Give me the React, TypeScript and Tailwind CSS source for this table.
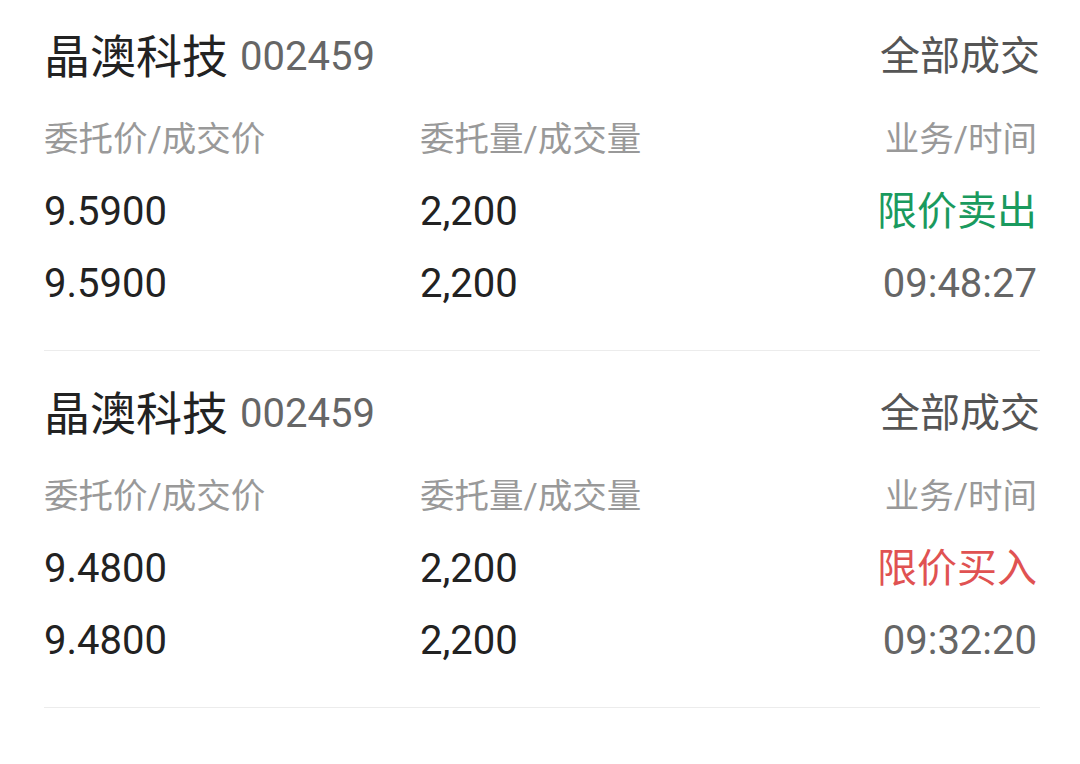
import React from "react";

type Item = {
  name: string;
  code: string;
  status: string;
  price: string;
  vol: string;
  biz: string;
  bizColor: "sell" | "buy";
  time: string;
};

const items: Item[] = [
  { name: "晶澳科技", code: "002459", status: "全部成交", price: "9.5900", vol: "2,200", biz: "限价卖出", bizColor: "sell", time: "09:48:27" },
  { name: "晶澳科技", code: "002459", status: "全部成交", price: "9.4800", vol: "2,200", biz: "限价买入", bizColor: "buy", time: "09:32:20" },
];

const font = { fontFamily: "Roboto, 'Noto Sans CJK SC', sans-serif" };

function Block({ it, first }: { it: Item; first: boolean }) {
  return (
    <div className={`border-b border-[#ececec] pb-[30px] ${first ? "pt-[27px]" : "pt-[33px]"}`}>
      <div className="flex h-[60px] items-center justify-between">
        <div className="flex items-center">
          <span className="text-[46px] leading-none text-[#222]">{it.name}</span>
          <span className="ml-[12px] text-[40px] leading-none text-[#666]">{it.code}</span>
        </div>
        <span className="text-[40px] leading-none text-[#555]">{it.status}</span>
      </div>
      <div className="mt-[26px] mb-[11px] flex h-[52px] items-center text-[34.5px] leading-none text-[#999]">
        <span className="w-[376px]">委托价/成交价</span>
        <span className="flex-1">委托量/成交量</span>
        <span className="pr-[3px]">业务/时间</span>
      </div>
      <div className="flex h-[72px] items-center text-[40px] leading-none text-[#222]">
        <span className="w-[376px]">{it.price}</span>
        <span className="flex-1">{it.vol}</span>
        <span className={`pr-[3px] ${it.bizColor === "sell" ? "text-[#1a9a5e]" : "text-[#e05252]"}`}>{it.biz}</span>
      </div>
      <div className="flex h-[72px] items-center text-[40px] leading-none text-[#222]">
        <span className="w-[376px]">{it.price}</span>
        <span className="flex-1">{it.vol}</span>
        <span className="pr-[3px] text-[#666]">{it.time}</span>
      </div>
    </div>
  );
}

export default function App() {
  return (
    <div className="h-[764px] w-[1080px] overflow-hidden bg-white px-[44px] pr-[40px]" style={font}>
      {items.map((it, i) => (
        <Block key={i} it={it} first={i === 0} />
      ))}
    </div>
  );
}
